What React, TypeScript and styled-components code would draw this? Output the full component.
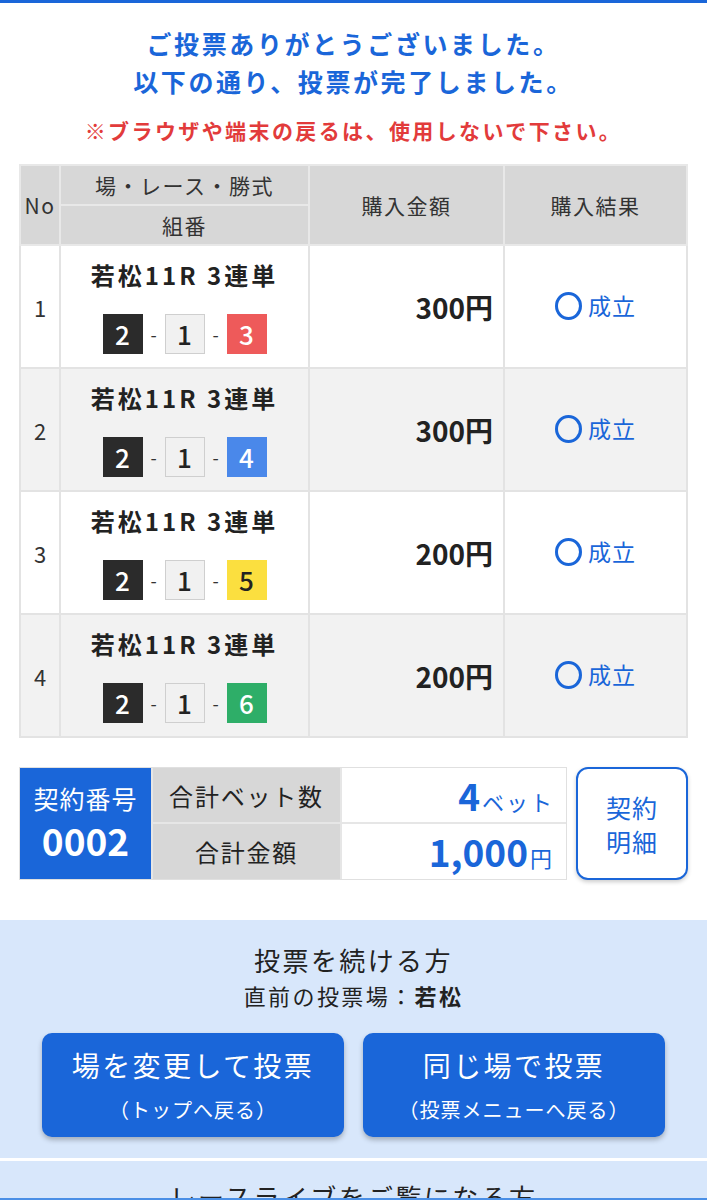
import React from "react";
import styled, { createGlobalStyle } from "styled-components";

const Global = createGlobalStyle`
  html, body { margin: 0; padding: 0; background: #fff; }
  body { font-family: "Noto Sans CJK JP", "Noto Sans", sans-serif; color: #222; }
  * { box-sizing: border-box; }
`;

const BLUE = "#1a66d9";

const Page = styled.div`
  border-top: 3px solid ${BLUE};
  width: 707px;
`;

const Intro = styled.div`
  padding: 21px 0 19px;
  text-align: center;
`;

const Thanks = styled.div`
  color: ${BLUE};
  font-size: 25px;
  font-weight: 700;
  letter-spacing: 2.6px;
  line-height: 38px;
`;

const Warning = styled.div`
  color: #e23b3b;
  font-size: 21px;
  font-weight: 700;
  letter-spacing: 2.4px;
  line-height: 30px;
  margin-top: 15px;
`;

const Table = styled.table`
  margin: 0 19px;
  width: 669px;
  border-collapse: collapse;
  table-layout: fixed;
`;

const Th = styled.th<{ $w?: number }>`
  ${(p) => (p.$w ? `width: ${p.$w}px;` : "")}
  background: #d7d7d7;
  border: 2px solid #e8e8e8;
  font-weight: 400;
  font-size: 21px;
  letter-spacing: 1.5px;
  color: #333;
  height: 40px;
  padding: 0;
`;

const Tr = styled.tr<{ $alt: boolean }>`
  background: ${(p) => (p.$alt ? "#f2f2f2" : "#fff")};
`;

const Td = styled.td<{ $align?: string }>`
  border: 2px solid #e3e3e3;
  height: 123px;
  padding: 0;
  text-align: ${(p) => p.$align || "center"};
  vertical-align: middle;
`;

const NoCell = styled(Td)`
  font-size: 22px;
  color: #333;
`;

const RaceTitle = styled.div`
  font-size: 24px;
  font-weight: 700;
  letter-spacing: 3px;
  line-height: 30px;
  color: #222;
`;

const Combo = styled.div`
  display: flex;
  justify-content: center;
  align-items: center;
  margin-top: 24px;
`;

const Dash = styled.span`
  width: 22px;
  text-align: center;
  font-size: 18px;
  color: #333;
`;

const BOAT: Record<number, { bg: string; fg: string; border?: string }> = {
  1: { bg: "#f1f1f1", fg: "#222", border: "#cfcfcf" },
  2: { bg: "#2b2b2b", fg: "#fff" },
  3: { bg: "#ee5a5a", fg: "#fff" },
  4: { bg: "#4a88ea", fg: "#fff" },
  5: { bg: "#fbdf3f", fg: "#222" },
  6: { bg: "#2eae68", fg: "#fff" },
};

const Boat = styled.span<{ $n: number }>`
  width: 40px;
  height: 40px;
  display: flex;
  align-items: center;
  justify-content: center;
  font-size: 26px;
  font-weight: 500;
  background: ${(p) => BOAT[p.$n].bg};
  color: ${(p) => BOAT[p.$n].fg};
  border: ${(p) => (BOAT[p.$n].border ? `1.5px solid ${BOAT[p.$n].border}` : "none")};
`;

const Amount = styled.span`
  display: inline-block;
  padding-right: 10px;
  font-size: 28px;
  font-weight: 700;
  color: #222;
`;

const Result = styled.span`
  display: inline-flex;
  align-items: center;
  gap: 6px;
  color: ${BLUE};
  font-size: 23px;
  letter-spacing: 1px;
`;

const Circle = styled.span`
  width: 27px;
  height: 28px;
  border: 3.5px solid ${BLUE};
  border-radius: 50%;
  display: inline-block;
  margin-top: 3px;
`;

const Summary = styled.div`
  margin: 29px 19px 0 19px;
  display: flex;
  gap: 9px;
  align-items: stretch;
`;

const SummaryGrid = styled.div`
  display: grid;
  grid-template-columns: 131px 187px 224px;
  grid-template-rows: 54px 55px;
  border: 1px solid #e0e0e0;
  gap: 2px;
  background: #e6e6e6;
`;

const ContractNo = styled.div`
  grid-row: 1 / span 2;
  background: ${BLUE};
  color: #fff;
  display: flex;
  flex-direction: column;
  align-items: center;
  justify-content: center;
  padding-bottom: 2px;
`;

const ContractLabel = styled.div`
  font-size: 25px;
  letter-spacing: 1px;
  line-height: 34px;
`;

const ContractNum = styled.div`
  font-size: 37px;
  font-weight: 700;
  line-height: 50px;
`;

const Label = styled.div`
  background: #d7d7d7;
  display: flex;
  align-items: center;
  justify-content: center;
  font-size: 24px;
  letter-spacing: 1.8px;
  color: #222;
`;

const Value = styled.div`
  background: #fff;
  display: flex;
  align-items: baseline;
  justify-content: flex-end;
  padding: 0 12px 0 0;
  color: ${BLUE};
  line-height: 54px;
`;

const Big = styled.span`
  font-size: 37px;
  font-weight: 700;
`;

const Unit = styled.span`
  font-size: 22px;
  letter-spacing: 2px;
  margin-left: 2px;
`;

const DetailButton = styled.button`
  flex: 1;
  background: #fff;
  border: 2px solid ${BLUE};
  border-radius: 12px;
  color: ${BLUE};
  font-family: inherit;
  font-size: 25px;
  line-height: 34px;
  letter-spacing: 1px;
  box-shadow: 0 2px 4px rgba(0, 0, 0, 0.2);
  padding: 0;
`;

const Continue = styled.section`
  margin-top: 40px;
  background: #d8e7fb;
  padding: 22px 42px 21px;
  text-align: center;
`;

const SectionTitle = styled.div`
  font-size: 26px;
  letter-spacing: 2.4px;
  line-height: 36px;
  color: #222;
`;

const Previous = styled.div`
  font-size: 22px;
  letter-spacing: 2.4px;
  line-height: 34px;
  color: #222;
  b { font-weight: 700; }
`;

const Buttons = styled.div`
  display: grid;
  grid-template-columns: 1fr 1fr;
  gap: 19px;
  margin-top: 21px;
`;

const ActionButton = styled.button`
  height: 104px;
  background: ${BLUE};
  color: #fff;
  border: none;
  border-radius: 10px;
  box-shadow: 0 3px 5px rgba(0, 0, 0, 0.25);
  font-family: inherit;
  display: flex;
  flex-direction: column;
  align-items: center;
  justify-content: center;
  padding: 0;
`;

const ActionMain = styled.span`
  font-size: 28px;
  letter-spacing: 2.4px;
  line-height: 40px;
`;

const ActionSub = styled.span`
  font-size: 20px;
  letter-spacing: 1px;
  line-height: 30px;
  margin-top: 10px;
`;

const Live = styled.section`
  margin-top: 3px;
  background: #d8e7fb;
  padding: 18px 0 40px;
  text-align: center;
`;

const FooterLine = styled.div`
  position: fixed;
  left: 0;
  right: 0;
  bottom: 0;
  height: 2px;
  background: #4a8fe6;
`;

const rows = [
  { no: 1, combo: [2, 1, 3], amount: "300円" },
  { no: 2, combo: [2, 1, 4], amount: "300円" },
  { no: 3, combo: [2, 1, 5], amount: "200円" },
  { no: 4, combo: [2, 1, 6], amount: "200円" },
];

export default function App() {
  return (
    <Page>
      <Global />
      <Intro>
        <Thanks>ご投票ありがとうございました。</Thanks>
        <Thanks>以下の通り、投票が完了しました。</Thanks>
        <Warning>※ブラウザや端末の戻るは、使用しないで下さい。</Warning>
      </Intro>

      <Table>
        <thead>
          <tr>
            <Th $w={40} rowSpan={2}>No</Th>
            <Th $w={249}>場・レース・勝式</Th>
            <Th $w={195} rowSpan={2}>購入金額</Th>
            <Th rowSpan={2}>購入結果</Th>
          </tr>
          <tr>
            <Th>組番</Th>
          </tr>
        </thead>
        <tbody>
          {rows.map((r, i) => (
            <Tr key={r.no} $alt={i % 2 === 1}>
              <NoCell>{r.no}</NoCell>
              <Td>
                <RaceTitle>若松11R 3連単</RaceTitle>
                <Combo>
                  <Boat $n={r.combo[0]}>{r.combo[0]}</Boat>
                  <Dash>-</Dash>
                  <Boat $n={r.combo[1]}>{r.combo[1]}</Boat>
                  <Dash>-</Dash>
                  <Boat $n={r.combo[2]}>{r.combo[2]}</Boat>
                </Combo>
              </Td>
              <Td $align="right">
                <Amount>{r.amount}</Amount>
              </Td>
              <Td>
                <Result>
                  <Circle />
                  成立
                </Result>
              </Td>
            </Tr>
          ))}
        </tbody>
      </Table>

      <Summary>
        <SummaryGrid>
          <ContractNo>
            <ContractLabel>契約番号</ContractLabel>
            <ContractNum>0002</ContractNum>
          </ContractNo>
          <Label>合計ベット数</Label>
          <Value>
            <Big>4</Big>
            <Unit>ベット</Unit>
          </Value>
          <Label>合計金額</Label>
          <Value>
            <Big>1,000</Big>
            <Unit>円</Unit>
          </Value>
        </SummaryGrid>
        <DetailButton>
          契約
          <br />
          明細
        </DetailButton>
      </Summary>

      <Continue>
        <SectionTitle>投票を続ける方</SectionTitle>
        <Previous>
          直前の投票場：<b>若松</b>
        </Previous>
        <Buttons>
          <ActionButton>
            <ActionMain>場を変更して投票</ActionMain>
            <ActionSub>（トップへ戻る）</ActionSub>
          </ActionButton>
          <ActionButton>
            <ActionMain>同じ場で投票</ActionMain>
            <ActionSub>（投票メニューへ戻る）</ActionSub>
          </ActionButton>
        </Buttons>
      </Continue>

      <Live>
        <SectionTitle>レースライブをご覧になる方</SectionTitle>
      </Live>
      <FooterLine />
    </Page>
  );
}
